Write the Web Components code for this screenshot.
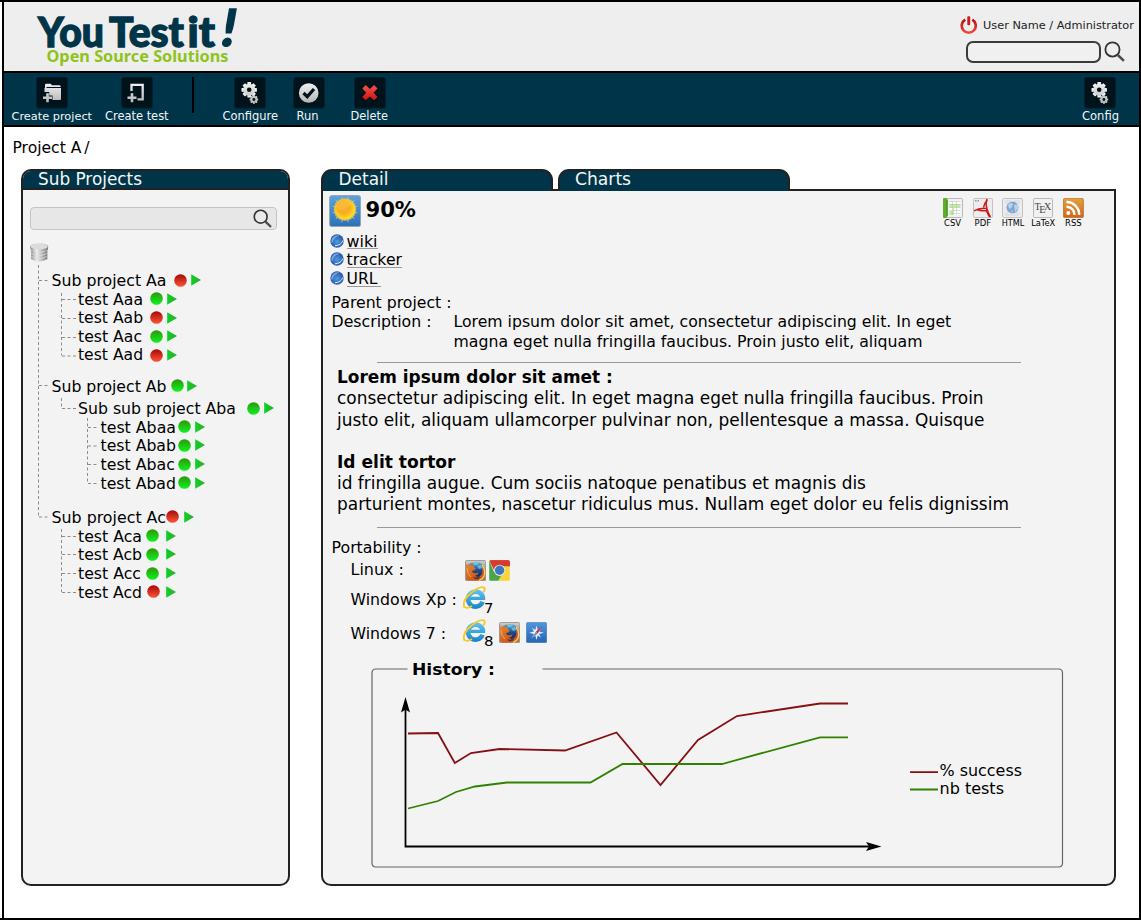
<!DOCTYPE html>
<html lang="en">
<head>
<meta charset="utf-8">
<title>You Test it!</title>
<style>
html,body{margin:0;background:#fff}
body{width:1141px;height:920px;overflow:hidden;font-family:"DejaVu Sans",sans-serif;color:#000}
</style>
</head>
<body>
<test-app></test-app>
<script>
const FONT = '"DejaVu Sans",sans-serif';
function define(name, markup, extra = {}) {
  customElements.define(name, class extends HTMLElement {
    constructor() {
      super();
      this.attachShadow({ mode: 'open' });
    }
    connectedCallback() {
      this.shadowRoot.innerHTML = typeof markup === 'function' ? markup(this) : markup;
      if (extra.ready) extra.ready(this);
    }
  });
}

/* Single line of text whose font size adapts to the requested width. */
define('fit-text', `<style>
:host{display:block;white-space:pre;line-height:19px;height:19px;flex:none}
span{display:inline-block;font-size:16px;line-height:inherit;vertical-align:top}
</style><span><slot></slot></span>`, {
  ready(el) {
    const s = el.shadowRoot.querySelector('span');
    const w = +el.getAttribute('w');
    el.style.width = w + 'px';
    for (let i = 0; i < 3; i++) {
      const size = parseFloat(getComputedStyle(s).fontSize);
      s.style.fontSize = (size * w / s.getBoundingClientRect().width) + 'px';
    }
  }
});

const GEAR = (cx, cy, r, n, hole) => {
  let t = '';
  for (let i = 0; i < n; i++) t += `<rect x="${cx - r * .24}" y="${cy - r}" width="${r * .48}" height="${r}" rx=".5" transform="rotate(${i * 360 / n} ${cx} ${cy})"/>`;
  return `${t}<circle cx="${cx}" cy="${cy}" r="${r * .78}"/><circle cx="${cx}" cy="${cy}" r="${hole}" fill="#00141c"/>`;
};
const TILE = `<defs><linearGradient id="g" x1="0" y1="6" x2="0" y2="26" gradientUnits="userSpaceOnUse"><stop offset="0" stop-color="#f2f2f2"/><stop offset="1" stop-color="#b4b4b4"/></linearGradient><linearGradient id="r" x1="0" y1="0" x2="0" y2="1"><stop offset="0" stop-color="#f0574d"/><stop offset="1" stop-color="#d40f0f"/></linearGradient></defs><rect x=".3" y=".3" width="31.4" height="31.4" rx="2.5" fill="#00222f"/><rect x=".8" y=".6" width="30.4" height="29.8" rx="2" fill="#00131b"/>`;
const FIREFOX = `<defs><linearGradient id="a" x2="0" y2="1"><stop stop-color="#ccc"/><stop offset="1" stop-color="#8a8a8a"/></linearGradient><linearGradient id="b" x2="0" y2="1"><stop stop-color="#58b5dc"/><stop offset=".55" stop-color="#1c4d91"/><stop offset="1" stop-color="#14275c"/></linearGradient><linearGradient id="c" x2=".6" y2="1"><stop stop-color="#e28a34"/><stop offset="1" stop-color="#d14e10"/></linearGradient></defs>
<rect x=".4" y=".4" width="20.4" height="20.4" rx="1.6" fill="#b07a50" stroke="#8e8e8e" stroke-width=".7"/><path d="M1 1h19.4v11Q18 6 14 5L7 2.500L1 6Z" fill="url(#a)"/><circle cx="11.500" cy="9.500" r="7.600" fill="url(#b)"/><path d="M8 3.500q3-2 6-1l-1 2-3 1zM12 6l4-1 1 3-3 1z" fill="#8bd0e4" opacity=".7"/>
<path d="M1.200 3.500L3.500 5.800Q5.500 4.800 7.500 5.600L8.800 4.600L9 7.200L10.800 8.200L9.500 10.200L7 11Q7.500 13.800 11 13.200L13.500 12.600Q13 15.500 9.500 15.800Q14.500 18.800 17 14Q18 10 16.500 5.500Q20.500 10 19.600 15Q17.500 20.600 11 20.600H3Q.8 18 1 12Z" fill="url(#c)"/><path d="M17 5q4 5 2 11q-1.500 3-5 4.500" fill="none" stroke="#f6d35b" stroke-width="1.300"/><path d="M2 8q0 6 4 9" fill="none" stroke="#edaa58" stroke-width="1"/><path d="M8 16.500q4 3 7-1l-1 3-4 .5z" fill="#1c2c5c"/>`;

const MAG = `<circle cx="8" cy="8" r="6.700" fill="#ededed" fill-opacity=".5" stroke="#333" stroke-width="1.700"/><path d="M13 13.200L18.800 18.800" stroke="#4c4c4c" stroke-width="2.400"/>`;

const ICONS = {
  project: [32, 32, TILE + `<path d="M9 14V8.200Q9 6.800 10.300 6.800H14.500Q15.600 6.800 15.700 8.300H23.500Q24.700 8.300 24.800 10H10.500V14M8.500 11H25V22Q25 23 24 23H16.500V18.500H13.200V15H8.500Z" fill="url(#g)"/><path d="M10.200 16.300h2.600v3.200h3.200v2.600h-3.200v3.200h-2.600v-3.200H7v-2.600h3.200z" fill="url(#g)"/>`],
  test: [32, 32, TILE + `<path d="M10.500 14V7.800H21.700V22.300H16.500" fill="none" stroke="url(#g)" stroke-width="2.300"/><path d="M9.700 16.300h2.600v3.200h3.200v2.600h-3.200v3.200H9.700v-3.200H6.500v-2.600h3.200z" fill="url(#g)"/>`],
  gears: [32, 32, TILE + `<g fill="url(#g)">${GEAR(15.2, 12.800, 7.700, 8, 2.300)}${GEAR(19.900, 22.500, 4.300, 8, 1.400)}</g>`],
  run: [32, 32, TILE + `<circle cx="15.700" cy="16" r="9.800" fill="url(#g)"/><path d="M10.500 16L14.300 19.600L21 12" fill="none" stroke="#00131b" stroke-width="3.200"/>`],
  del: [32, 32, TILE + `<path d="M8.300 11.400L11.700 8L15.900 12L20.100 8L23.500 11.400L19.600 15.700L23.500 19.900L20.100 23.300L15.900 19.400L11.700 23.300L8.300 19.900L12.200 15.700Z" fill="url(#r)"/>`],
  power: [18, 19, `<defs><linearGradient id="p" x2="0" y2="1"><stop stop-color="#b51414"/><stop offset="1" stop-color="#f0483a"/></linearGradient></defs><path d="M5.200 3.700A7 7 0 1 0 12.300 3.700" fill="none" stroke="url(#p)" stroke-width="2.700"/><rect x="7.300" y=".3" width="2.900" height="9" rx="1" fill="#c4201c"/>`],
  mag: [20, 20, MAG],
  db: [19, 19, `<defs><linearGradient id="d"><stop stop-color="#8d8d8d"/><stop offset=".35" stop-color="#eee"/><stop offset=".6" stop-color="#c4c4c4"/><stop offset="1" stop-color="#777"/></linearGradient></defs>${[14.500, 11.500, 8.500, 5].map((y, i) => `<path d="M${i == 3 ? .3 : 1} ${y - 1.500}Q9 ${y + 3.500} ${i == 3 ? 18 : 17.500} ${y - 1.500}V${y + 1.700}Q9 ${y + 6} 1 ${y + 1.700}Z" fill="url(#d)" stroke="#ddd" stroke-width=".5"/>`).join('')}<path d="M.2 4Q.500 .600 9.200 .500Q17.800 .600 18.200 4L17.600 7Q14 9 9.200 9Q4 9 .800 7Z" fill="url(#d)"/><ellipse cx="9.200" cy="3.500" rx="8.500" ry="3" fill="#dcdcdc"/>`],
  sun: [32, 32, `<defs><linearGradient id="s" x2="0" y2="1"><stop stop-color="#5da2de"/><stop offset="1" stop-color="#2d70b5"/></linearGradient><radialGradient id="o" cx=".45" cy=".42"><stop stop-color="#f5a93c"/><stop offset=".6" stop-color="#fbb019"/><stop offset="1" stop-color="#ffd628"/></radialGradient></defs><rect x=".6" y=".6" width="31" height="31" rx="2.200" fill="url(#s)" stroke="#96a4b4"/><g stroke="#d9cf72" stroke-width="1" opacity=".75">${Array.from({ length: 24 }, (_, i) => `<path d="M16 ${i % 2 ? 1.500 : 3.500}V8" transform="rotate(${i * 15} 16 14.500)"/>`).join('')}</g><circle cx="16" cy="14.500" r="11.300" fill="#e7d162" opacity=".6"/><circle cx="16" cy="14.500" r="10.300" fill="url(#o)"/><path d="M8 13Q8.500 8 12 7Q18 3 23 9L14 15Z" fill="#ffcc5c" opacity=".35"/>`],
  globe: [14, 14, `<defs><radialGradient id="w" cx=".5" cy=".55"><stop stop-color="#4aa0d8"/><stop offset="1" stop-color="#2a56b0"/></radialGradient></defs><circle cx="7" cy="7" r="6.700" fill="url(#w)"/><path d="M12.800 6.500Q11.300 11.300 5 11.800" fill="none" stroke="#dfe8f8" stroke-width="1"/><path d="M1.300 8.500Q1 3.500 5.500 1.600Q9 .8 9.500 2Q4 2.500 2.600 8.500Z" fill="#91b4e2" opacity=".8"/>`],
  csv: [20, 20, `<rect x=".5" y=".5" width="19" height="19" rx="1.300" fill="#f1f1f1" stroke="#b9b9b9"/><path d="M0 1Q0 0 1 0H3.200L4.800 1.500V18L3.200 20H1Q0 20 0 19Z" fill="#5eae2c"/><path d="M4 2V18" stroke="#3a8a16" stroke-width=".8"/><rect x="6.500" y="3" width="11" height="14" fill="#fff"/><path d="M6.500 3.500H17.500M6.500 6.500H17.500M6.500 9.500H17.500M6.500 12.500H17.500M6.500 15.500H17.500M9.500 3V17M13.500 3V17" stroke="#ccc" stroke-width=".7"/><path d="M6.500 6H17.500V9.500H11V17H6.500V13H10V9.500H6.500Z" fill="#8fd868" opacity=".55"/>`],
  pdf: [20, 20, `<rect x=".5" y=".5" width="19" height="19" rx="1.300" fill="#ededed" stroke="#c3c3c3"/><path d="M2 2.800h4" stroke="#999" stroke-width="1.500" stroke-dasharray="1 .5"/><path d="M14 1Q12.300 5.500 14 11Q15 15 17.500 19M14.500 1.500Q11.500 5 10.500 9.500M1 12.800Q6 9.800 14 10.500M4.500 12Q9.500 13 15 12.800" fill="none" stroke="#cc1d1d" stroke-width="1.500"/><path d="M13.300 9.500L14.400 14L17.800 19.500L15.300 18.500L12.800 13Z" fill="#c11"/>`],
  html: [21, 20, `<rect x=".5" y=".5" width="20" height="19" rx="1.300" fill="#ececec" stroke="#c2c2c2"/><path d="M3 3h6M12 3h6M3 5h3M15 5h3M3 15h3M14 15h4M3 17h14" stroke="#d4d4d4" stroke-width=".8"/><circle cx="10.500" cy="9.500" r="6" fill="#7fa6d2"/><path d="M6 6.500Q9 4 11 6L9.500 10L7 11zM12 7l4-1v5l-3 3zM9 12l2 1-1 2z" fill="#b7d1e8"/>`],
  latex: [20, 20, `<rect x=".5" y=".5" width="19" height="19" rx="1.300" fill="#f1f1f1" stroke="#b9b9b9"/><g font-family="Liberation Serif,serif" font-size="10" fill="#444"><text x="1.500" y="12">T</text><text x="6.200" y="14.500">E</text><text x="11" y="12">X</text></g>`],
  rss: [21, 20, `<defs><linearGradient id="k" x2="0" y2="1"><stop stop-color="#e6a13e"/><stop offset="1" stop-color="#d0661b"/></linearGradient></defs><rect x=".4" y=".4" width="20" height="19.200" rx="1.300" fill="url(#k)" stroke="#b5651f" stroke-width=".7"/><circle cx="5.300" cy="14.900" r="2" fill="#fff"/><path d="M3.500 8.700A8 8 0 0 1 11.500 16.900M3.500 4A12.600 12.600 0 0 1 16.200 16.900" fill="none" stroke="#fff" stroke-width="2.500"/>`],
  firefox: [21, 21, FIREFOX],
  chrome: [21, 21, `<clipPath id="z"><rect x=".2" y=".2" width="20.600" height="20.600" rx="1.500"/></clipPath><g clip-path="url(#z)"><path d="M0 0H21V7H10Z" fill="#d33b31"/><path d="M0 0V21H10L14.500 12L5 12Z" fill="#4ba548"/><path d="M0 0L6 12L10.500 6.200H21V0Z" fill="#d73a30"/><path d="M10.500 6.200H21V21H9L15 11Z" fill="#f8d438"/></g><circle cx="10.600" cy="10.300" r="5.600" fill="#eee"/><circle cx="10.600" cy="10.300" r="4.700" fill="#3b78bd"/>`],
  ie: [23, 23, `<defs><linearGradient id="e" x1="0" y1="3" x2="0" y2="22" gradientUnits="userSpaceOnUse"><stop stop-color="#62c6f0"/><stop offset="1" stop-color="#1a85cc"/></linearGradient></defs><path d="M19.600 15.800A7.500 7.500 0 1 1 19.900 11.500" fill="none" stroke="url(#e)" stroke-width="4.600"/><path d="M7 10.700H22.200V14H7Z" fill="url(#e)"/><path d="M1.500 21.500Q-1.500 15 8 7Q17 -.500 21.200 1.500Q22.500 3 20.500 6.500" fill="none" stroke="#f5ca22" stroke-width="1.900"/><path d="M1.300 20.500Q3.500 23.500 9 20" fill="none" stroke="#f5ca22" stroke-width="1.500"/>`],
  safari: [21, 21, `<defs><linearGradient id="f" x2="0" y2="1"><stop stop-color="#4f97dc"/><stop offset="1" stop-color="#2564b4"/></linearGradient></defs><rect x=".4" y=".4" width="20.400" height="20.400" rx="1.600" fill="url(#f)" stroke="#4d7db5" stroke-width=".7"/><path d="M10.500 3.500L11.700 8L15 6L13 9.500L17.800 10.800L13 12L15 15.500L11.700 13.500L10.500 18L9.300 13.500L6 15.500L8 12L3.200 10.800L8 9.500L6 6L9.300 8Z" fill="#e8f1fb"/><path d="M15.800 4.300L11.800 11.600L9.800 9.800Z" fill="#e02424"/><path d="M5.300 17L9.800 9.800L11.800 11.600Z" fill="#7890b0"/>`],
  okball: [13, 13, `<defs><linearGradient id="h" x2="0" y2="1"><stop stop-color="#2f960c"/><stop offset="1" stop-color="#0df41d"/></linearGradient></defs><circle cx="6.500" cy="6.500" r="6.300" fill="url(#h)"/>`],
  koball: [13, 13, `<defs><linearGradient id="h" x2="0" y2="1"><stop stop-color="#a60707"/><stop offset="1" stop-color="#ff5638"/></linearGradient></defs><circle cx="6.500" cy="6.500" r="6.300" fill="url(#h)"/>`],
  play: [10, 12, `<defs><linearGradient id="l"><stop stop-color="#0ed125"/><stop offset="1" stop-color="#2aad2c"/></linearGradient></defs><path d="M.2 .3L10 6L.2 11.700Z" fill="url(#l)"/>`]
};
define('app-icon', el => {
  const [w, h, body] = ICONS[el.getAttribute('name')];
  return `<style>:host{display:block;width:${w}px;height:${h}px;flex:none}svg{display:block}</style><svg width="${w}" height="${h}" viewBox="0 0 ${w} ${h}">${body}</svg>`;
});

define('app-logo', `<style>:host{display:block;width:230px;height:67px}svg{display:block;overflow:visible}
.n{font:900 41px Lato,sans-serif;fill:#003549;stroke:#003549;stroke-width:1.3px}.s{font:700 16.500px "Noto Sans",sans-serif;fill:#8fc31a}</style>
<svg width="230" height="67" viewBox="35 3 230 67">
<text class="n" x="38" y="46.500" textLength="66" lengthAdjust="spacingAndGlyphs">You</text>
<text class="n" x="109" y="46.500" textLength="75" lengthAdjust="spacingAndGlyphs">Test</text>
<text class="n" x="187.500" y="46.500" textLength="27.500" lengthAdjust="spacingAndGlyphs">it</text>
<text class="n" x="0" y="0" style="font-size:51px" transform="translate(219 46.200) skewX(-10)">!</text>
<text class="s" x="46.500" y="62.300" textLength="182" lengthAdjust="spacingAndGlyphs">Open Source Solutions</text></svg>`);

define('user-area', `<style>
:host{display:block;width:175px;padding-top:14px}
.u{display:flex;height:19px;color:#222}.u fit-text{margin:0 0 0 5px}
.q{display:flex;margin:5px 0 0 6px}
.box{box-sizing:border-box;width:135px;height:22px;border:2.500px solid #3b3b3b;border-radius:7px;background:#f0f0f0;margin-top:1px}
.q app-icon{margin:1px 0 0 3px;zoom:1.06}</style>
<div class="u"><app-icon name="power"></app-icon><fit-text w="151">User Name / Administrator</fit-text></div>
<div class="q"><div class="box"></div><app-icon name="mag"></app-icon></div>`);

define('tool-button', el => `<style>
:host{display:flex;flex-direction:column;align-items:center;width:max-content;color:#f1f5f7;flex:none}
app-icon{position:relative;left:var(--dx,0px)}fit-text{margin-top:-2px}</style>
<app-icon name="${el.getAttribute('icon')}"></app-icon><fit-text w="${el.getAttribute('w')}"><slot></slot></fit-text>`);

define('tool-bar', `<style>
:host{display:flex;box-sizing:border-box;height:56px;background:#003549;border-top:2px solid #000;border-bottom:2px solid #000;padding:4px 20px 0 7.500px;align-items:flex-start}
i{width:2px;height:36px;background:#000;margin:0 29px 0 23px}</style>
<tool-button icon="project" w="80.500">Create project</tool-button>
<tool-button icon="test" w="63.500" style="margin-left:13px">Create test</tool-button><i></i>
<tool-button icon="gears" w="55.500">Configure</tool-button>
<tool-button icon="run" w="22" style="margin-left:13.500px;--dx:1px">Run</tool-button>
<tool-button icon="del" w="37.500" style="margin-left:27px;--dx:.5px">Delete</tool-button>
<tool-button icon="gears" w="37" style="margin-left:auto;--dx:-1px">Config</tool-button>`);

const TREE = [
  [286, 51.5, 'Sub project Aa', 166.5, 0, 180, 191],
  [304.7, 78, 'test Aaa', 143, 1, 156.5, 167],
  [323.4, 78, 'test Aab', 143, 0, 156, 167],
  [342.1, 78, 'test Aac', 142, 1, 156.5, 167],
  [360.8, 78, 'test Aad', 143, 0, 156, 167],
  [391.3, 51.5, 'Sub project Ab', 166.5, 1, 177, 187],
  [413.8, 78, 'Sub sub project Aba', 236, 1, 253.3, 264],
  [432.5, 100.5, 'test Abaa', 176, 1, 184.8, 195],
  [451.2, 100.5, 'test Abab', 176, 1, 184.8, 195],
  [469.9, 100.5, 'test Abac', 175, 1, 184.8, 195],
  [488.6, 100.5, 'test Abad', 176, 1, 184.8, 195],
  [522.7, 51.5, 'Sub project Ac', 166, 0, 172.7, 184],
  [541.4, 78, 'test Aca', 142, 1, 152.5, 166],
  [560.1, 78, 'test Acb', 142, 1, 152.5, 166],
  [578.8, 78, 'test Acc', 141, 1, 152.5, 166],
  [597.5, 78, 'test Acd', 142, 0, 153, 165.5]
];
define('tree-row', el => {
  const [b, x, t, end, ok, ball, play] = TREE[+el.getAttribute('index')];
  return `<style>:host{display:flex;align-items:center;height:19px;padding-left:${x - 23}px}
app-icon{margin-top:-1px}.b{margin-left:${ball - 6.5 - end}px}.p{margin-left:${play - ball - 6.5}px}</style>
<fit-text w="${end - x}">${t}</fit-text><app-icon class="b" name="${ok ? 'okball' : 'koball'}"></app-icon><app-icon class="p" name="play"></app-icon>`;
});
define('project-tree', () => {
  let y = 262.3, rows = '';
  TREE.forEach((r, i) => {
    const top = r[0] - 14.8;
    rows += `<tree-row index="${i}" style="margin-top:${(top - y).toFixed(2)}px"></tree-row>`;
    y = top + 19;
  });
  return `<style>:host{display:block;position:relative}svg{position:absolute;left:0;top:0}
app-icon{margin-left:7px}</style>
<svg width="264" height="360" viewBox="23 244 264 360"><path fill="none" stroke="#8c8c8c" stroke-width="1" stroke-dasharray="3 2.500" d="M38.500 266V517.500M39 281.500H49M39 386.500H49M39 518H49M61.500 294V356.500M62 300.500H78M62 319.500H78M62 338.500H78M62 357H78M61.500 399V409M62 409.500H78M87.500 419V484.500M88 428.500H98M88 447H98M88 465.500H98M88 484.500H98M61.500 530V593M62 537.500H78M62 555.500H78M62 574.500H78M62 593.500H78"/></svg>
<app-icon name="db"></app-icon>${rows}`;
});

define('project-panel', `<style>
:host{display:block;box-sizing:border-box;width:269px;height:717px;border:2px solid #222;border-radius:10px;background:#f3f3f3;overflow:hidden}
header{box-sizing:border-box;height:20px;background:#003549;border-bottom:2px solid #222;color:#f5f5f5;padding-left:15px}
header fit-text{margin-top:-1px}
.q{box-sizing:border-box;display:flex;justify-content:flex-end;width:247.500px;height:23px;border:1px solid #c4c4c4;border-radius:4px;background:#e7e7e7;margin:17px 0 13.300px 6.500px}
.q app-icon{margin:1px 4px 0 0;zoom:.96}</style>
<header><fit-text w="104">Sub Projects</fit-text></header>
<div class="q"><app-icon name="mag"></app-icon></div><project-tree></project-tree>`);

define('tab-head', el => `<style>
:host{display:block;box-sizing:border-box;width:232px;height:22px;border:2px solid #222;border-bottom:0;border-radius:11px 11px 0 0;background:#003549;color:#f5f5f5;padding-left:15.500px}
fit-text{margin-top:-1px}</style><fit-text w="${el.getAttribute('w')}"><slot></slot></fit-text>`);

define('export-button', el => `<style>:host{display:flex;flex-direction:column;align-items:center;width:30.200px}
fit-text{line-height:10px;height:10px}</style>
<app-icon name="${el.getAttribute('icon')}"></app-icon><fit-text w="${el.getAttribute('w')}"><slot></slot></fit-text>`);

define('link-row', el => `<style>:host{display:flex;height:18.800px}app-icon{margin:2px 2.500px 0 0}
div{border-bottom:1px solid #999;height:16.500px;padding-right:${el.getAttribute('pad') || 0}px}</style>
<app-icon name="globe"></app-icon><div><fit-text w="${el.getAttribute('w')}"><slot></slot></fit-text></div>`);

define('history-chart', `<style>:host{display:block;width:694px;height:212px}svg{display:block}
text{font:15.500px ${FONT}}</style>
<svg width="694" height="212" viewBox="371 658 694 212" fill="none">
<path d="M407.500 670H376Q372 670 372 674V864Q372 868 376 868H1058.500Q1062.500 868 1062.500 864V674Q1062.500 670 1058.500 670H542.500" stroke="#666" stroke-width="1.200"/>
<text x="412" y="676" fill="#000" style="font-weight:bold" textLength="83" lengthAdjust="spacingAndGlyphs">History :</text>
<path d="M405.500 708V847.500H872" stroke="#000" stroke-width="1.800"/>
<path d="M405.500 698L410 713.500L405.500 710.500L401 713.500ZM881.500 847.500L866 852L869 847.500L866 843Z" fill="#000"/>
<path d="M408 734.500L438 734L454.800 764L471 754L499.500 750L565 751.500L616.500 733.500L660.500 786L698 741L737 717L820 704.500H848M910 773.200H938" stroke="#861013" stroke-width="1.800"/>
<path d="M408 809.500L438 802L456 793L475 787.500L507 783.500H590.500L622.500 765H722L820 738.300H848M910 790.500H938" stroke="#2f8202" stroke-width="1.800"/>
<text x="939.500" y="776.500" fill="#000" textLength="82.500" lengthAdjust="spacingAndGlyphs">% success</text>
<text x="939.500" y="795.300" fill="#000" textLength="64.500" lengthAdjust="spacingAndGlyphs">nb tests</text></svg>`);

define('os-row', el => `<style>:host{display:flex;height:19px;align-items:flex-start;margin-left:27.500px}
.i{display:flex;margin-left:${el.getAttribute('gap')}px}</style>
<fit-text w="${el.getAttribute('w')}">${el.getAttribute('label')}</fit-text><div class="i"><slot></slot></div>`);

define('detail-panel', `<style>
:host{display:block;width:795px}
.tabs{display:flex;gap:4.500px;height:20px}
.body{box-sizing:border-box;height:697px;border:2px solid #222;border-radius:0 0 10px 10px;background:#f3f3f3;padding:3.500px 0 0}
.top{display:flex;height:38px}.top>app-icon{margin-left:5.500px}.pct{margin:4px 0 0 5px;line-height:22px;height:22px;font-weight:bold}
.ex{display:flex;margin:3.500px 0 0 521.500px}
link-row{margin-left:7px}
.d{display:flex;margin-left:8.500px}
hr{border:0;height:1px;background:#999;margin:0 0 0 53.500px;width:644.500px}
.p fit-text{height:21.200px;line-height:21.200px}.p{margin:4.500px 0 0 14px;height:160px}
.b{font-weight:bold}
.n{margin:0 5.500px 0 -2px}
</style>
<div class="tabs"><tab-head w="50">Detail</tab-head><tab-head w="56">Charts</tab-head></div>
<div class="body">
<div class="top"><app-icon name="sun"></app-icon><fit-text class="pct" w="50.500">90%</fit-text>
<div class="ex"><export-button icon="csv" w="17">CSV</export-button><export-button icon="pdf" w="16.500">PDF</export-button><export-button icon="html" w="22.500">HTML</export-button><export-button icon="latex" w="24">LaTeX</export-button><export-button icon="rss" w="16.500">RSS</export-button></div></div>
<link-row w="31" style="margin-top:-1px">wiki</link-row><link-row w="55.500">tracker</link-row><link-row w="31" pad="3">URL</link-row>
<div class="d" style="margin-top:5.500px"><fit-text w="120">Parent project :</fit-text></div>
<div class="d"><fit-text w="100">Description :</fit-text>
<div style="margin-left:22px"><fit-text w="498" style="height:19.400px">Lorem ipsum dolor sit amet, consectetur adipiscing elit. In eget</fit-text><fit-text w="468.500">magna eget nulla fringilla faucibus. Proin justo elit, aliquam</fit-text></div></div>
<hr style="margin-top:11px">
<div class="p"><fit-text class="b" w="276">Lorem ipsum dolor sit amet :</fit-text>
<fit-text w="647">consectetur adipiscing elit. In eget magna eget nulla fringilla faucibus. Proin</fit-text>
<fit-text w="647.500">justo elit, aliquam ullamcorper pulvinar non, pellentesque a massa. Quisque</fit-text>
<fit-text class="b" w="118.500" style="margin-top:21.200px">Id elit tortor</fit-text>
<fit-text w="529">id fringilla augue. Cum sociis natoque penatibus et magnis dis</fit-text>
<fit-text w="672">parturient montes, nascetur ridiculus mus. Nullam eget dolor eu felis dignissim</fit-text></div>
<hr>
<div class="d" style="margin-top:9.500px"><fit-text w="90">Portability :</fit-text></div>
<os-row w="53.500" gap="61" label="Linux :" style="margin-top:3.500px"><app-icon name="firefox"></app-icon><app-icon name="chrome" style="margin-left:3px"></app-icon></os-row>
<os-row w="106.500" gap="6" label="Windows Xp :" style="margin-top:11px"><app-icon name="ie" style="margin-top:-4px"></app-icon><fit-text w="9.500" class="n" style="margin-top:9px">7</fit-text></os-row>
<os-row w="95.500" gap="17" label="Windows 7 :" style="margin-top:14.500px"><app-icon name="ie" style="margin-top:-5px"></app-icon><fit-text w="9.500" class="n" style="margin-top:8px">8</fit-text><app-icon name="firefox" style="margin-top:-2px"></app-icon><app-icon name="safari" style="margin:-2px 0 0 6px"></app-icon></os-row>
<history-chart style="margin:14.500px 0 0 48px"></history-chart>
</div>`);

define('test-app', `<style>
:host{display:block;box-sizing:border-box;width:1141px;height:920px;border:solid #000;border-width:2px 2px 2px 0;background:#fff}
.frame{margin-left:2px;border-left:2px solid #000;height:916px;box-sizing:border-box}
.head{display:flex;justify-content:space-between;height:69px;background:#eee}
app-logo{margin:1px 0 0 31px}user-area{margin-right:4px}
.crumb{margin:12px 0 11px 8.500px}
main{display:flex;padding-left:17px;gap:31px}</style>
<div class="frame"><div class="head"><app-logo></app-logo><user-area></user-area></div>
<tool-bar></tool-bar>
<div class="crumb"><fit-text w="77">Project A<span style="letter-spacing:-2px"> </span>/</fit-text></div>
<main><project-panel></project-panel><detail-panel></detail-panel></main></div>`);
</script>
</body>
</html>
